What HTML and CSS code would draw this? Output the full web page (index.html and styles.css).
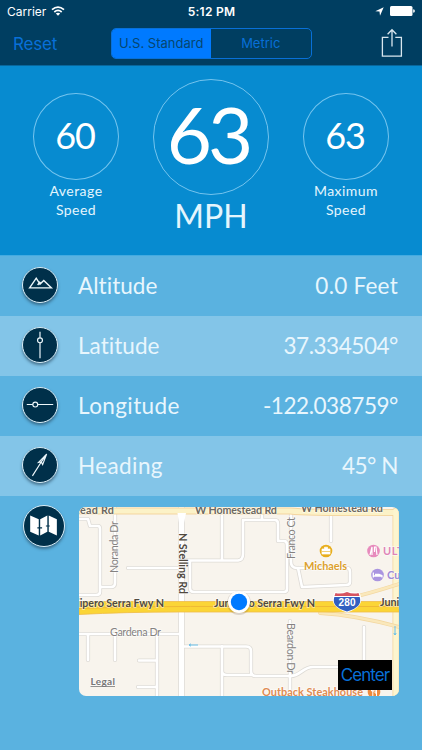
FILE: index.html
```html
<!DOCTYPE html>
<html lang="en">
<head>
<meta charset="utf-8">
<title>Speedometer</title>
<link rel="stylesheet" href="styles.css">
</head>
<body>
<header class="top">
  <div class="status">
    <div class="carrier"><span>Carrier</span>
      <svg width="14" height="10" viewBox="0 0 14 10" fill="none" stroke="#fff" stroke-width="1.7"><path d="M1 3.7Q7-1.6 13 3.7M3.3 6Q7 2.7 10.7 6"/><path d="M7 9.8 4.8 7.5Q7 5.8 9.2 7.5Z" fill="#fff" stroke="none"/></svg>
    </div>
    <b class="time">5:12 PM</b>
    <div class="power">
      <svg width="9" height="9" viewBox="0 0 9 9"><path d="M8.7.3 5 8.7 4.5 4.6.3 4.2Z" fill="#fff"/></svg>
      <svg width="26" height="10" viewBox="0 0 26 10" fill="#fff"><rect width="22.5" height="10" rx="1.5"/><path d="M23.2 3.3q1.7.2 1.7 1.7t-1.7 1.7z"/></svg>
    </div>
  </div>
  <nav class="bar">
    <span class="reset">Reset</span>
    <div class="segments"><span class="seg on">U.S. Standard</span><span class="seg">Metric</span></div>
    <svg class="share" width="22" height="30" viewBox="0 0 22 30" fill="none" stroke="#d9e7ef" stroke-width="1.3"><path d="M7.5 9.3H1.4V28.2H20.4V9.3H14.3M11 18.5V1.8M6.6 6.2 11 1.7 15.4 6.2"/></svg>
  </nav>
</header>
<section class="speeds">
  <div class="small"><div class="ring">60</div><p>Average<br>Speed</p></div>
  <div class="main"><div class="ring big">63</div><p class="unit">MPH</p></div>
  <div class="small"><div class="ring">63</div><p>Maximum<br>Speed</p></div>
</section>
<section class="rows">
  <div class="row"><i class="badge"><svg viewBox="0 0 36 36"><path d="M7 21 14 10.8 18 17 22 13.2 30 21Z M15.500 18 18.2 14.5" stroke-width="1.5"/></svg></i><span>Altitude</span><span class="value loose">0.0 Feet</span></div>
  <div class="row light"><i class="badge"><svg viewBox="0 0 36 36"><path d="M18 4V10.400M18 15.600V32"/><circle cx="18" cy="13" r="2.6"/></svg></i><span>Latitude</span><span class="value">37.334504°</span></div>
  <div class="row"><i class="badge"><svg viewBox="0 0 36 36"><path d="M4 17.500H10.400M15.600 17.500H32"/><circle cx="13" cy="17.500" r="2.6"/></svg></i><span class="wide">Longitude</span><span class="value">-122.038759°</span></div>
  <div class="row light"><i class="badge"><svg viewBox="0 0 36 36"><path d="M10 29.500 20.500 13M25 6.500 16.500 15.300 19.400 14.800 20.800 17.600ZM25 6.500 19.400 14.800"/></svg></i><span class="wide">Heading</span><span class="value">45° N</span></div>
</section>
<section class="map-row">
  <i class="badge map-badge"><svg viewBox="0 0 42 42"><path d="M6.500 10 15.500 14V31L6.500 27ZM17 14 24.500 10V27L17 31ZM26 10 34.500 14V31L26 27Z" fill="#fff" stroke="none"/><path d="M14 23h5M23 21h4" stroke="#00304a" stroke-width="1.200"/></svg></i>
  <div class="map">
    <svg width="320" height="189" viewBox="79 507 320 189">
      <defs>
        <g id="streets">
          <path d="M79 519H88L90 526H98Q100 526 100 529V592Q100 595 96 595H79M115 508V583Q115 587 111 587H101M128 568H181M222 512V560M182 560.500H238Q243 560 243 554V520H275Q278 520 278 524V541H284Q287 541 287 545V589Q287 592 284 592H194Q190 592 190 588V561M262 513V520M291 512V562Q291 568 297 568H347Q350 568 350 572V582Q350 585 346 585L302 587 298 568M331 512V541M79 634H181M88 634V660M115 634V660M157 634V696M139 660.500H157M138 687H157M182 646.500H246Q251 646.500 251 651V671Q251 676 256 676H291C300 676 303 667 313 667H365M222 646V696M222 671Q222 675 227 675H252M290 621V696M364 627V667"/>
        </g>
      </defs>
      <rect x="79" y="507" width="320" height="189" fill="#f8f4ed"/>
      <g fill="none" stroke-linecap="round" stroke-linejoin="round">
        <use href="#streets" stroke="#dedbd6" stroke-width="4.200"/>
        <path d="M181.500 507V696" stroke="#dedbd6" stroke-width="6.500"/>
        <use href="#streets" stroke="#fff" stroke-width="2.600"/>
        <path d="M181.500 507V696" stroke="#fff" stroke-width="5"/>
        <path d="M79 511H290Q310 513 395.500 512.500" stroke="#f4d59f" stroke-width="6.800"/>
        <path d="M396 511V696" stroke="#f4d59f" stroke-width="7"/>
        <path d="M79 511H290Q310 513 395.500 512.500" stroke="#fcf2c7" stroke-width="5.200"/>
        <path d="M396 511V696" stroke="#fcf5cf" stroke-width="5.400"/>
        <path d="M177.500 513H186L184 523H179Z" fill="#fff"/>
        <path d="M345 599Q368 594 399 584M320 613Q355 615 399 627" stroke="#f3d7a0" stroke-width="3.800"/>
        <path d="M345 599Q368 594 399 584M320 613Q355 615 399 627" stroke="#fae8bb" stroke-width="2.500"/>
      </g>
      <path d="M79 601.500H399V612H180Q125 612 79 614.500Z" fill="#fbd536" stroke="#efbd49" stroke-width=".8"/>
      <path d="M79 608.500Q150 606 230 606.500H399" fill="none" stroke="#efb934"/>
      <path d="M198 645H189M191 643.800 189 645 191 646.200M395 626V635M393.800 633 395 635 396.200 633" fill="none" stroke="#69bfe8"/>
      <g class="road">
        <text x="77" y="514" textLength="37">:ead Rd</text>
        <text x="195" y="514" textLength="82">W Homestead Rd</text>
        <text x="301" y="512" textLength="82">W Homestead Rd</text>
      </g>
      <g class="highway">
        <text x="77" y="607" textLength="87">iipero Serra Fwy N</text>
        <text x="214" y="607" textLength="101">Junipero Serra Fwy N</text>
        <text x="380" y="605.500" textLength="41">Junipero</text>
        <text transform="translate(179 533) rotate(90)" textLength="61">N Stelling Rd</text>
      </g>
      <g class="minor">
        <text transform="translate(118 573) rotate(-90)" textLength="52">Noranda Dr</text>
        <text transform="translate(295 559) rotate(-90)" textLength="42">Franco Ct</text>
        <text transform="translate(286.500 623) rotate(90)" textLength="51">Beardon Dr</text>
        <text x="110" y="636" textLength="51">Gardena Dr</text>
      </g>
      <text class="place gold" x="304" y="569.500" textLength="43">Michaels</text>
      <text class="place pink" x="383" y="554.500" textLength="28">ULTA</text>
      <text class="place violet" x="387" y="579" textLength="30">Cuper</text>
      <text class="place orange" x="262" y="695.500" textLength="101">Outback Steakhouse</text>
      <circle cx="326" cy="551" r="6.300" fill="#e8ae1c"/><path d="M322 549h8v5h-8zM324.500 549v-1.800h3v1.800" fill="#fff" stroke="#fff" stroke-width=".7"/><path d="M322 551.500h8" stroke="#e8ae1c" stroke-width=".6"/>
      <circle cx="373.500" cy="551" r="6.300" fill="#e78bbd"/><path d="M370 555 372 547V555M374 547H376L377 555M374.500 547V552" fill="none" stroke="#fff" stroke-width="1.200"/>
      <circle cx="377.500" cy="575" r="6.300" fill="#aa95e0"/><path d="M373.300 572.500V577.500M373.300 576H382V577.500M375 574.500H379L382 575.500" fill="none" stroke="#fff" stroke-width="1.300"/>
      <circle cx="374" cy="692" r="6.300" fill="#ee8a3d"/><path d="M371.500 688V691H374V688M372.800 688V696M376.500 696V688Q375 690 375 693H376.500" fill="none" stroke="#fff"/>
      <path d="M335 592Q341 593.500 347 591Q353 593.500 359 592L360.500 595Q364.500 607 347 612.500Q329.500 607 333.500 595Z" fill="#fff"/>
      <path d="M335.500 593Q341 594.500 347 592Q353 594.500 358.500 593L359.500 596H334.500Z" fill="#d65360"/>
      <path d="M334.300 597H359.700Q363 607 347 611.500Q331 607 334.300 597Z" fill="#315fc1"/>
      <text class="shield" x="338.500" y="606" textLength="17">280</text>
      <circle cx="239" cy="603" r="12" fill="#68503b" opacity=".2"/><circle cx="239" cy="602" r="11" fill="#fff"/><circle cx="239" cy="602" r="8.200" fill="#007aff"/>
      <text class="legal" x="90.500" y="684.500" textLength="24.500">Legal</text><path d="M90.500 686.500H115" stroke="#777" stroke-width=".8"/>
    </svg>
    <span class="center">Center</span>
  </div>
</section>
</body>
</html>
```
FILE: styles.css
```css
* { box-sizing: border-box; }
body { margin: 0; width: 422px; height: 750px; overflow: hidden; background: #5ab2e0; color: #fff; font-family: Lato, sans-serif; }
p { margin: 0; }
.top { height: 66px; background: #003e61; border-bottom: 1px solid #08679c; font-family: Inter, sans-serif; }
.status { display: grid; grid-template-columns: 1fr auto 1fr; align-items: center; height: 22px; padding: 0 6px 0 7px; font-size: 12px; }
.carrier, .power { display: flex; align-items: center; gap: 5px; }
.power { justify-content: flex-end; gap: 6px; }
.time { font-weight: 600; letter-spacing: .25px; }
.bar { display: flex; height: 43px; align-items: center; justify-content: space-between; padding: 0 19px 0 13px; color: #0870d8; }
.reset { width: 79px; font-size: 17px; letter-spacing: -.2px; }
.segments { display: flex; width: 201px; height: 31px; border: 1px solid #0870d8; border-radius: 5px; overflow: hidden; font-size: 13px; margin-left: 6px; }
.seg { width: 50%; text-align: center; line-height: 29px; }
.on { background: #007aff; color: #06466f; white-space: nowrap; }
.share { margin: 0 0 2px 57px; }
.speeds { display: flex; justify-content: center; gap: 34px; height: 190px; background: #078bd0; border-bottom: 1px solid #43abe1; }
.small { width: 86px; padding-top: 27px; text-align: center; }
.ring { display: flex; align-items: center; justify-content: center; width: 86px; height: 87px; padding: 0 2px 4px 0; border: 1px solid #74c4ee; border-radius: 50%; font-size: 36px; letter-spacing: -1.2px; }
.big { width: 116px; height: 116px; padding: 0 6px 6px 0; font-size: 78px; letter-spacing: -4px; }
.small p { margin-top: 1px; font-size: 14px; line-height: 19px; letter-spacing: .45px; color: #e4f5fd; }
.main { padding-top: 13px; }
.unit { text-align: center; font-size: 32px; line-height: 42px; color: #e4f5fd; }
.row { display: flex; align-items: center; height: 60px; padding: 0 24px 2px 22px; font-size: 22.5px; color: #e8f6fd; letter-spacing: .05px; }
.light { background: #83c5e8; }
.badge { display: block; width: 36px; height: 36px; margin-right: 20px; border: 1.5px solid #d9eef8; border-radius: 50%; background: #00304a; box-shadow: 0 2px 3px #24445a99; }
.row .badge { margin-top: -1px; }
.badge svg { display: block; width: 100%; height: 100%; fill: none; stroke: #edf7fb; stroke-width: 1.25; }
.wide { letter-spacing: .4px; }
.value { margin-left: auto; letter-spacing: -.45px; }
.value.loose { letter-spacing: .25px; }
.map-row { display: flex; align-items: flex-start; padding: 9px 23px 0 23px; }
.map-badge { width: 42px; height: 42px; margin: 0 14px 0 0; }
.map { position: relative; width: 320px; height: 189px; margin-top: 2px; overflow: hidden; border-radius: 7px; }
.map > svg { display: block; }
.map text { paint-order: stroke; stroke: #fff9; stroke-width: 1.5px; font-size: 10.8px; }
.road { fill: #6d6861; font-weight: 700; }
.highway { fill: #514a3f; font-weight: 700; }
.minor { fill: #858280; }
.place { font-weight: 700; }
.map text.place { font-size: 11px; }
.gold { fill: #dda12c; }
.pink { fill: #df85b7; }
.violet { fill: #9f8bd6; }
.orange { fill: #df8b52; }
.map text.shield { fill: #fff; stroke: none; font: 700 10px "Liberation Sans", sans-serif; }
.map text.legal { fill: #777; font-weight: 700; font-size: 10px; }
.center { position: absolute; right: 7px; bottom: 6px; width: 54px; height: 30px; background: #000; color: #0870d8; font: 17px/30px Inter, sans-serif; text-align: center; letter-spacing: -.9px; }
```
